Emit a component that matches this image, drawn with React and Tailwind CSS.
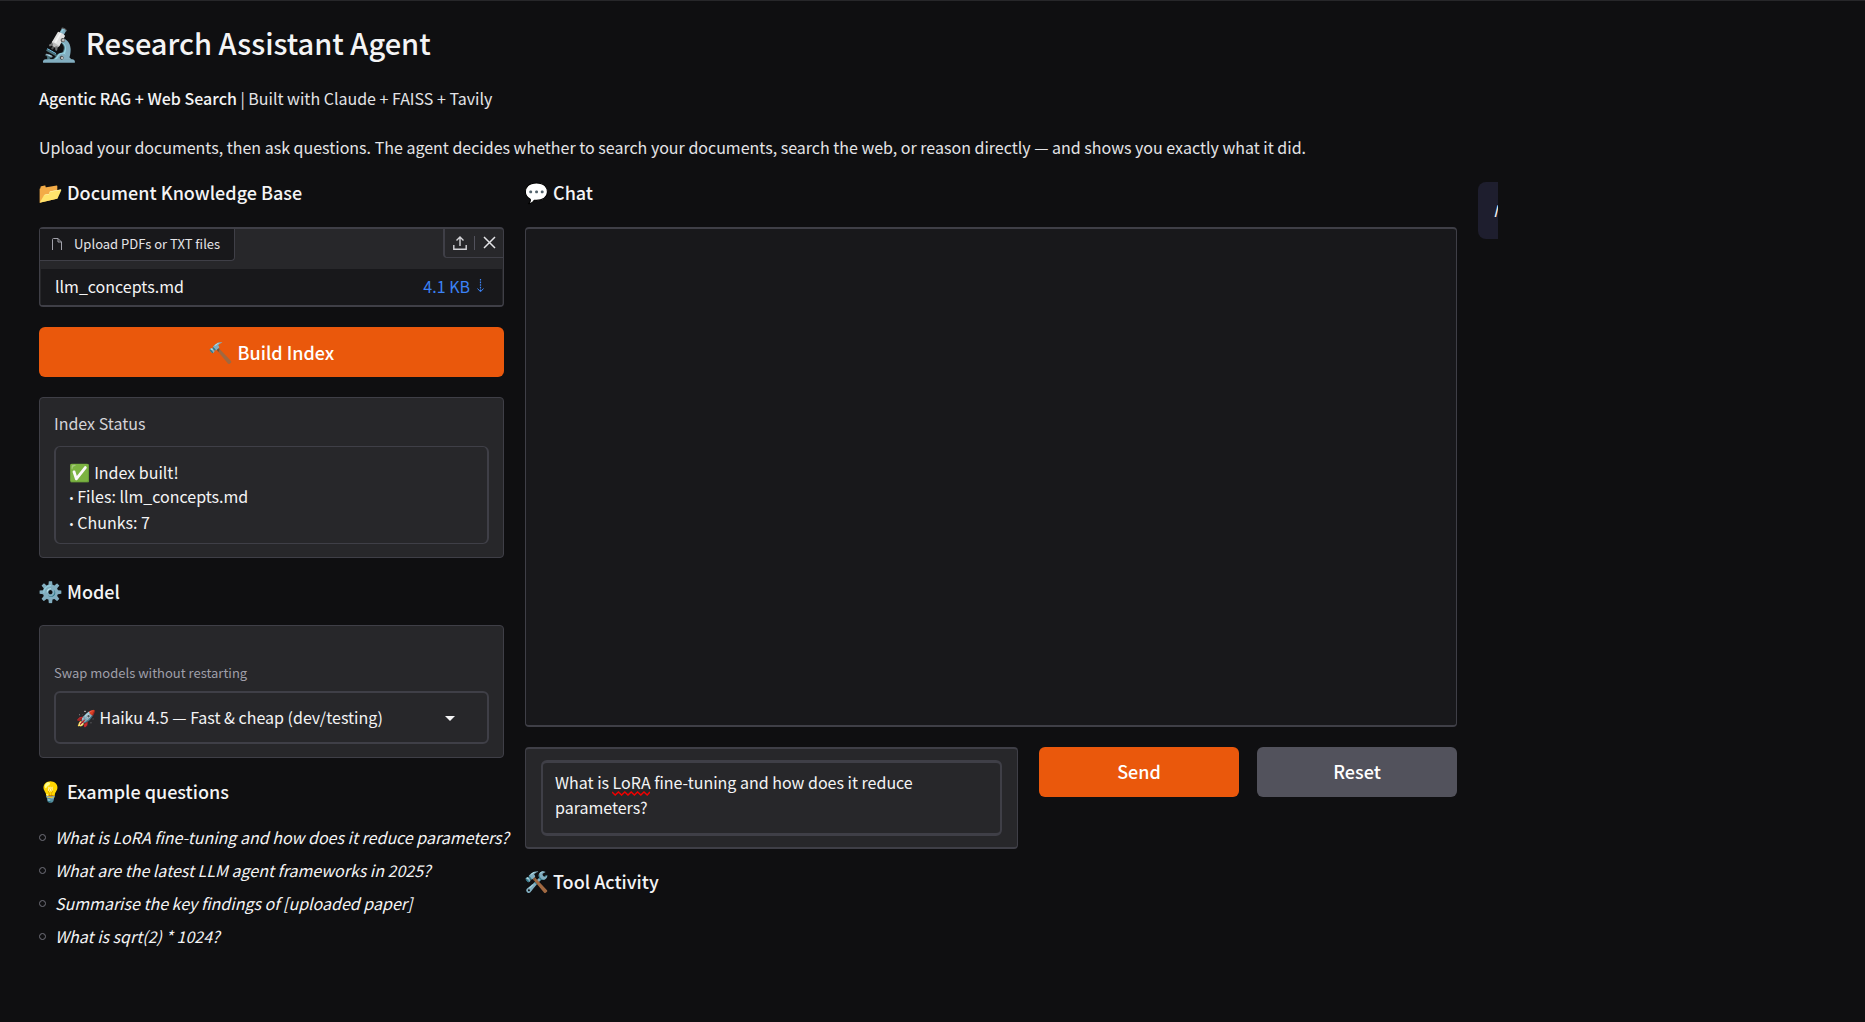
import { useState } from 'react';

const EXAMPLES = [
  'What is LoRA fine-tuning and how does it reduce parameters?',
  'What are the latest LLM agent frameworks in 2025?',
  'Summarise the key findings of [uploaded paper]',
  'What is sqrt(2) * 1024?',
];

const MODELS = ['🚀 Haiku 4.5 — Fast & cheap (dev/testing)'];

const STATUS = ['Files: llm_concepts.md', 'Chunks: 7'];

function SectionTitle({ emoji, children }) {
  return (
    <h3 className="flex h-5 items-center gap-1 text-[18px] leading-5 font-medium text-zinc-100">
      <span className="flex w-6 justify-center text-[20px]">{emoji}</span>
      {children}
    </h3>
  );
}

function FilePanel() {
  return (
    <section className="mt-[25px] h-20 rounded-[4px] border-2 border-x border-zinc-700 bg-zinc-800">
      <div className="flex items-start justify-between">
        <div className="flex h-8 items-center gap-[11px] rounded-br-[4px] border-r border-b border-zinc-700 bg-zinc-900 pr-[14px] pb-[2px] pl-[11px] text-[13px] leading-5 text-zinc-200">
          <svg width="12" height="14" viewBox="0 0 12 14" fill="none" stroke="#a1a1aa" strokeWidth="1">
            <path d="M1.5 13V2.5a1 1 0 0 1 1-1H7l3.5 3.5v8M7 1.5V5h3.5" />
          </svg>
          Upload PDFs or TXT files
        </div>
        <div className="flex h-[29px] items-center rounded-bl-[4px] border-b border-l-2 border-zinc-700 pr-[7px] pb-px pl-2">
          <button aria-label="Upload" className="text-zinc-300">
            <svg width="14" height="16" viewBox="0 0 14 16" fill="none" stroke="currentColor" strokeWidth="1.4">
              <path d="M7 11V2M3.5 5.5 7 2l3.5 3.5M.8 10v4.2h12.4V10" />
            </svg>
          </button>
          <span className="mr-2 ml-[7px] h-[14px] w-px bg-zinc-600" />
          <button aria-label="Clear" className="text-zinc-200">
            <svg width="13" height="13" viewBox="0 0 13 13" fill="none" stroke="currentColor" strokeWidth="1.5">
              <path d="m1 1 11 11M12 1 1 12" />
            </svg>
          </button>
        </div>
      </div>
      <div className="mx-px mt-2 flex h-9 items-center justify-between bg-zinc-900 pr-[18px] pb-[2px] pl-[14px] text-[16px] leading-6 text-zinc-100">
        <span>llm_concepts.md</span>
        <a href="#download" className="flex items-center gap-[7px] text-[#3b82f6]">
          4.1 KB
          <svg width="7" height="14" viewBox="0 0 7 14" fill="none" stroke="currentColor">
            <path d="M3.5 0v12" strokeWidth="1.2" strokeDasharray="1.6 1" />
            <path d="m.5 9.5 3 3.3 3-3.3" />
          </svg>
        </a>
      </div>
    </section>
  );
}

export default function App() {
  const [question, setQuestion] = useState(EXAMPLES[0]);
  const [model, setModel] = useState(MODELS[0]);

  return (
    <div className="min-h-screen border-t border-zinc-800 bg-[#0f0f11] font-['Noto_Sans_CJK_SC','Noto_Color_Emoji',sans-serif] text-[16px] leading-6 text-zinc-200">
      <main className="max-w-[1498px] overflow-hidden pl-[39px]">

        {/* Header */}
        <header>
          <h1 className="mt-[21px] flex h-10 items-center gap-[7px] text-[29px] leading-10 font-medium text-zinc-100">
            <span className="text-[32px]">🔬</span>
            Research Assistant Agent
          </h1>
          <p className="mt-6">
            <strong className="font-medium text-zinc-100">Agentic RAG + Web Search</strong> | Built with Claude + FAISS + Tavily
          </p>
          <p className="mt-[25px]">
            Upload your documents, then ask questions. The agent decides whether to search your documents, search the web, or reason directly — and shows you exactly what it did.
          </p>
        </header>

        <div className="mt-[23px] grid grid-cols-[minmax(0,465fr)_minmax(0,932fr)_20px] gap-[21px]">

          {/* Documents and model */}
          <div>
            <SectionTitle emoji="📂">Document Knowledge Base</SectionTitle>
            <FilePanel />
            <button className="mt-5 flex h-[50px] w-full items-center justify-center gap-1 rounded-[6px] bg-[#ea580c] text-[18px] font-medium text-white">
              <span className="text-[20px]">🔨</span>
              Build Index
            </button>

            <section className="mt-5 rounded-[4px] border border-zinc-700 bg-zinc-800 px-[14px] py-[13px]">
              <label htmlFor="status" className="block text-[16px] leading-6 text-zinc-300">Index Status</label>
              <output
                id="status"
                className="mt-[11px] block h-[98px] rounded-[6px] border border-x-2 border-zinc-700 px-[13px] py-[13px] text-[16px] leading-6 text-zinc-100"
              >
                <p className="flex gap-1">
                  <span className="text-[17px]">✅</span>
                  Index built!
                </p>
                {STATUS.map(line => (
                  <p key={line}>
                    <span className="font-['Open_Sans',sans-serif] text-[13px]">• </span>
                    {line}
                  </p>
                ))}
              </output>
            </section>

            <div className="mt-[23px]">
              <SectionTitle emoji="⚙️">Model</SectionTitle>
            </div>
            <section className="mt-6 rounded-[4px] border border-zinc-700 bg-zinc-800 px-[14px] pt-[35px] pb-[13px]">
              <label htmlFor="model" className="block text-[13px] leading-6 text-zinc-400">Swap models without restarting</label>
              <div className="relative mt-[6px]">
                <select
                  id="model"
                  value={model}
                  onChange={e => setModel(e.target.value)}
                  className="block h-[53px] w-full appearance-none rounded-[6px] border-2 border-zinc-700 bg-zinc-800 pr-12 pb-[2px] pl-5 text-[16px] text-zinc-100 outline-none"
                >
                  {MODELS.map(m => <option key={m}>{m}</option>)}
                </select>
                <svg width="10" height="5" viewBox="0 0 10 5" className="pointer-events-none absolute top-[25px] right-[34px] fill-zinc-100">
                  <path d="M0 0h10L5 5z" />
                </svg>
              </div>
            </section>

            <div className="mt-[23px]">
              <SectionTitle emoji="💡">Example questions</SectionTitle>
            </div>
            <ul className="mt-5 text-[16px] leading-[33px] text-zinc-100 italic">
              {EXAMPLES.map(q => (
                <li key={q} className="flex items-center gap-[9px] whitespace-nowrap">
                  <span className="size-[7px] shrink-0 rounded-full border border-zinc-500" />
                  {q}
                </li>
              ))}
            </ul>
          </div>

          {/* Chat */}
          <div>
            <SectionTitle emoji="💬">Chat</SectionTitle>
            <div className="mt-[25px] h-[500px] rounded-[4px] border-2 border-x border-zinc-700 bg-zinc-900" />
            <div className="mt-5 flex items-start">
              <div className="flex-1 rounded-[4px] border-2 border-x border-zinc-700 bg-zinc-800 px-[15px] py-[11px]">
                <div className="relative">
                  <textarea
                    aria-label="Message"
                    spellCheck={false}
                    value={question}
                    onChange={e => setQuestion(e.target.value)}
                    className="block h-[76px] w-full resize-none overflow-hidden rounded-[6px] border-x-2 border-y-[3px] border-zinc-700 py-[7px] pr-20 pl-3 text-[16px] leading-[25px] text-zinc-100 outline-none"
                  />
                  <svg width="38" height="5" viewBox="0 0 38 5" fill="none" className="pointer-events-none absolute top-[31px] left-[71px]">
                    <path d="M0 1 3.2 4 6.4 1 9.6 4 12.8 1 16 4 19.2 1 22.4 4 25.6 1 28.8 4 32 1 35.2 4 38 1" stroke="#f00000" strokeWidth="1.5" />
                  </svg>
                </div>
              </div>
              <button className="ml-[21px] h-[50px] w-[200px] rounded-[6px] bg-[#ea580c] pb-[2px] text-[18px] font-medium text-white">Send</button>
              <button className="ml-[18px] h-[50px] w-[200px] rounded-[6px] bg-zinc-600 pb-[2px] text-[18px] font-medium text-white">Reset</button>
            </div>
            <div className="mt-[22px]">
              <SectionTitle emoji="🛠️">Tool Activity</SectionTitle>
            </div>
          </div>

          {/* Side panel, only its edge is in view */}
          <aside className="h-[57px] overflow-hidden rounded-l-[8px] bg-[#1e1e2e] pt-4 pl-[15px] text-zinc-100 italic">
            N
          </aside>
        </div>
      </main>
    </div>
  );
}
